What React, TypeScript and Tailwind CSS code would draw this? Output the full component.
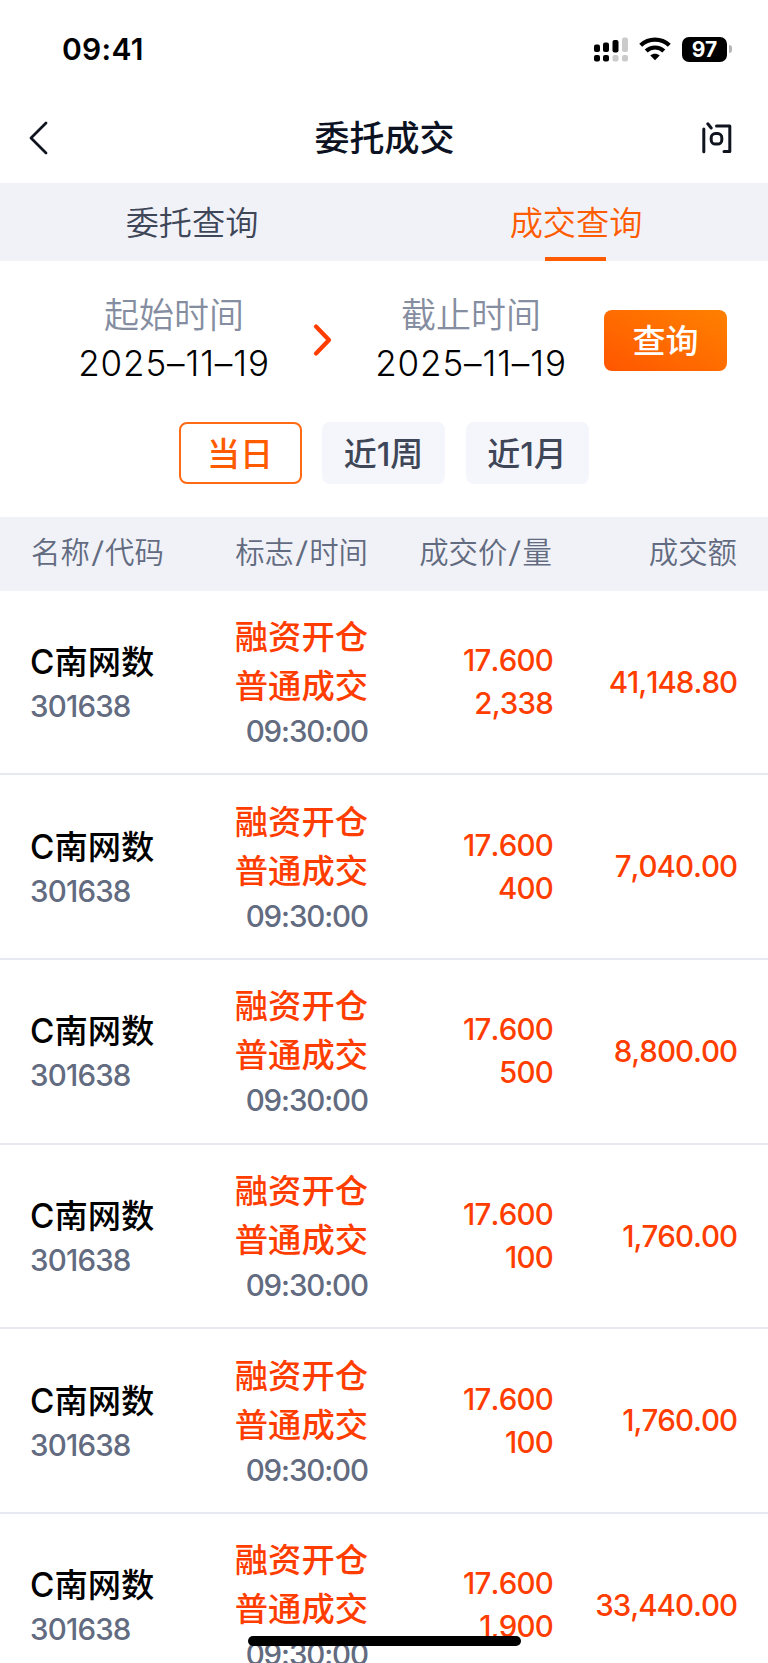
import React from "react";

const trades = [
  { volume: "2,338", amount: "41,148.80" },
  { volume: "400", amount: "7,040.00" },
  { volume: "500", amount: "8,800.00" },
  { volume: "100", amount: "1,760.00" },
  { volume: "100", amount: "1,760.00" },
  { volume: "1,900", amount: "33,440.00" },
];

function StatusBar() {
  return (
    <div className="flex h-[98px] items-center justify-between pl-[62px] pr-[36px]">
      <p className="text-[30px] font-semibold leading-none tracking-[0.3px] text-black">
        09:41
      </p>
      <div className="flex items-center">
        <svg width="34" height="26" viewBox="0 0 34 26">
          <g fill="#000">
            <rect x="0" y="8.5" width="6" height="7.5" rx="2" />
            <rect x="9" y="6.5" width="6" height="9.5" rx="2" />
            <rect x="18.5" y="4" width="6" height="12.5" rx="2" />
            <rect x="0" y="19" width="6" height="6.5" rx="2" />
            <rect x="9" y="19" width="6" height="6.5" rx="2" />
          </g>
          <g fill="#cbcbcb">
            <rect x="28" y="1.5" width="6" height="14.5" rx="2" />
            <rect x="18.5" y="19" width="6" height="6.5" rx="2" />
            <rect x="28" y="19" width="6" height="6.5" rx="2" />
          </g>
        </svg>
        <svg className="ml-[11px]" width="32" height="24" viewBox="0 0 32 24">
          <g fill="none" stroke="#000" strokeWidth="4.2">
            <path d="M1.7 8.3C9.8 0.8 22.2 0.8 30.3 8.3" />
            <path d="M7.2 14C12.2 9.3 19.8 9.3 24.8 14" />
          </g>
          <path d="M11.3 18.5C14 16.3 18 16.3 20.7 18.5L16 23.3Z" fill="#000" />
        </svg>
        <div className="ml-[11px] flex h-[25px] w-[45px] items-center justify-center rounded-[7px] bg-black text-[21px] font-bold leading-none text-white">
          97
        </div>
        <div className="ml-[2px] h-[8px] w-[3px] rounded-r-full bg-[#b5b5b5]" />
      </div>
    </div>
  );
}

function Header() {
  return (
    <div className="flex h-[85px] items-center justify-between pl-[29px] pr-[36px] pb-[6px]">
      <svg width="36" height="34" viewBox="0 0 36 34" fill="none">
        <path
          d="M17 2L2 17L17 32"
          stroke="#10141f"
          strokeWidth="2.8"
          strokeLinecap="round"
          strokeLinejoin="round"
        />
      </svg>
      <h1 className="pt-[2px] pl-[2px] text-[35px] font-medium leading-none text-[#0c1222]">
        委托成交
      </h1>
      <svg width="30" height="32" viewBox="0 0 30 32" fill="none">
        <g stroke="#10141f" strokeWidth="3" strokeLinecap="round">
          <path d="M1.8 7V29.8" />
          <path d="M5.8 1.8L9.2 6" />
          <path d="M14.5 4H27.8V29.5H22" strokeLinejoin="round" />
          <rect x="9.2" y="11.5" width="10.6" height="10.6" rx="4.2" />
        </g>
      </svg>
    </div>
  );
}

function Tabs() {
  return (
    <div className="grid h-[78px] grid-cols-2 bg-[#f1f2f8] text-[33.2px] font-[350] leading-none">
      <div className="flex items-center justify-center pt-[4px] text-[#3e4658]">
        委托查询
      </div>
      <div className="relative flex items-center justify-center pt-[4px] text-[#ff5b00]">
        成交查询
        <span className="absolute bottom-0 left-[161px] h-[4px] w-[61px] bg-[#ff5b00]" />
      </div>
    </div>
  );
}

function DateField({ label, value }: { label: string; value: string }) {
  return (
    <div className="flex w-[190px] flex-col items-center whitespace-nowrap font-[350]">
      <p className="text-[35px] leading-[48px] text-[#858da0]">{label}</p>
      <p className="text-[35px] leading-[48px] tracking-[0.9px] text-black">
        {value}
      </p>
    </div>
  );
}

function Filters() {
  return (
    <div className="h-[256px] pt-[30px]">
      <div className="flex items-center pl-[79px]">
        <DateField label="起始时间" value="2025–11–19" />
        <svg className="ml-[44px] mt-[2px]" width="20" height="34" viewBox="0 0 20 34" fill="none">
          <path
            d="M3 3.5L16 17L3 30.5"
            stroke="#ff3d00"
            strokeWidth="4.2"
            strokeLinecap="round"
            strokeLinejoin="round"
          />
        </svg>
        <div className="ml-[43px]">
          <DateField label="截止时间" value="2025–11–19" />
        </div>
        <button className="ml-[38px] mt-[2px] h-[61px] w-[123px] rounded-[8px] bg-linear-to-tr from-[#ff5500] to-[#ff8000] pt-[3px] text-[33px] font-medium leading-none text-white">
          查询
        </button>
      </div>
      <div className="mt-[35px] flex justify-center gap-[20.5px] pr-px text-[33px] font-medium leading-none">
        <button className="h-[62px] w-[123px] rounded-[8px] border-2 border-[#ff6a14] pt-[3px] text-[#ff5b00]">
          当日
        </button>
        <button className="h-[62px] w-[123px] rounded-[8px] bg-[#f5f6fb] pt-[3px] text-[#3e4658]">
          近1周
        </button>
        <button className="h-[62px] w-[123px] rounded-[8px] bg-[#f5f6fb] pt-[3px] text-[#3e4658]">
          近1月
        </button>
      </div>
    </div>
  );
}

function Slash() {
  return <span className="inline-block scale-x-135 px-[2.5px]">/</span>;
}

export default function App() {
  return (
    <div className="relative h-[1663px] w-[768px] overflow-hidden bg-white font-['Inter','Noto_Sans_CJK_SC',sans-serif]">
      <StatusBar />
      <Header />
      <Tabs />
      <Filters />
      <div className="grid h-[73.5px] grid-cols-[151px_186px_184px_185px] items-center bg-[#f1f2f8] pb-[2px] pl-[31px] text-right text-[29.4px] font-[350] leading-none text-[#626b7f]">
        <p className="text-left">
          名称
          <Slash />
          代码
        </p>
        <p>
          标志
          <Slash />
          时间
        </p>
        <p>
          成交价
          <Slash />量
        </p>
        <p>成交额</p>
      </div>
      {trades.map((trade, i) => (
        <div
          key={i}
          className="grid h-[184.7px] grid-cols-[151px_186px_185px_184px] items-center border-b-2 border-[#e6e9f0] pl-[31px] text-right text-[29.5px] font-[450] text-[#ff3d00] [font-kerning:none]"
        >
          <div className="-ml-px pt-[4px] text-left">
            <p className="text-[33.3px] font-medium leading-[45px] text-black">
              <span className="font-[450]">C</span>南网数
            </p>
            <p className="leading-[43px] tracking-[-0.8px] text-[#626b7f]">
              301638
            </p>
          </div>
          <div>
            <p className="text-[33.3px] font-medium leading-[49px]">融资开仓</p>
            <p className="text-[33.3px] font-medium leading-[49px]">普通成交</p>
            <p className="leading-[40px] tracking-[-1.1px] text-[#626b7f]">
              09:30:00
            </p>
          </div>
          <div className="leading-[43px] tracking-[-0.8px]">
            <p>17.600</p>
            <p>{trade.volume}</p>
          </div>
          <p className="tracking-[-1px]">{trade.amount}</p>
        </div>
      ))}
      {/* home indicator */}
      <div className="absolute bottom-[17px] left-[248px] h-[10px] w-[273px] rounded-full bg-black" />
    </div>
  );
}
